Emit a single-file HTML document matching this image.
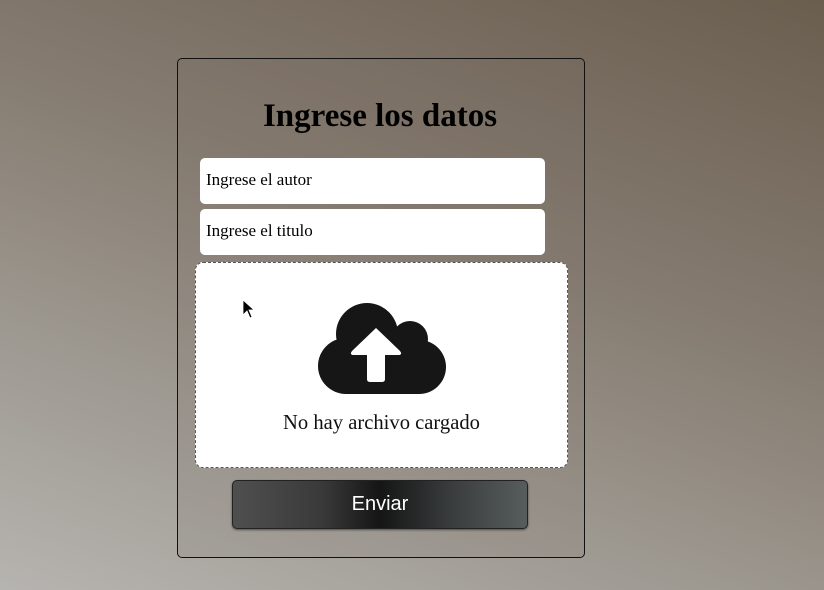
<!DOCTYPE html>
<html><head><meta charset="utf-8"><style>
html,body{margin:0;padding:0;width:824px;height:590px;overflow:hidden}
body{background:linear-gradient(200deg,#6a5e4f 0%,#857b70 40%,#9d9890 70%,#b6b4b0 100%);position:relative;font-family:"Liberation Serif",serif}
.card{position:absolute;left:177px;top:58px;width:406px;height:498px;border:1px solid #111;border-radius:5px;background:rgba(120,110,100,0.15)}
h1{position:absolute;left:0;right:0;top:97px;margin:0;text-align:center;font-size:33px;font-weight:bold;color:#000;line-height:38px}
.inp{position:absolute;left:200px;width:345px;height:46px;background:#fff;border-radius:5px;font-size:17px;line-height:44px;padding-left:6px;box-sizing:border-box;color:#000}
.drop{position:absolute;left:195px;top:262px;width:373px;height:206px;background:#fff;border:1px dashed #555;border-radius:8px;box-sizing:border-box}
.drop .t{position:absolute;left:0;right:0;top:149px;text-align:center;font-size:20.6px;color:#111}
.btn{position:absolute;left:232px;top:480px;width:296px;height:49px;border-radius:5px;box-sizing:border-box;border:1px solid #222;background:linear-gradient(90deg,#4f4f4f 0%,#3a3a3a 30%,#151515 50%,#3a3e3e 75%,#575d5c 100%);color:#fff;font-family:"Liberation Sans",sans-serif;font-size:20px;text-align:center;line-height:46px;box-shadow:0 1px 2px rgba(0,0,0,.5)}
</style></head><body>
<div class="card"></div>
<h1 style="left:177px;width:406px">Ingrese los datos</h1>
<div class="inp" style="top:158px">Ingrese el autor</div>
<div class="inp" style="top:209px">Ingrese el titulo</div>
<div class="drop">
<svg style="position:absolute;left:0;top:0" width="372" height="205" viewBox="195 262 372 205">
<g fill="#161616">
<circle cx="366" cy="333" r="31"/>
<circle cx="409" cy="338" r="18"/>
<circle cx="345" cy="365" r="28"/>
<circle cx="418" cy="366" r="27"/>
<rect x="345" y="330" width="73" height="63"/>
</g>
<path d="M375 327 L351 350 Q348 354 353 354 L366 354 L366 378 Q366 381 369 381 L381 381 Q384 381 384 378 L384 354 L397 354 Q402 354 399 350 Z" fill="#fff"/>
<path d="M242 299 L242 314 L246 310 L249 317 L251 316 L248 309 L253 309 Z" fill="#000" stroke="#fff" stroke-width="0.8"/>
</svg>
<div class="t">No hay archivo cargado</div>
</div>
<div class="btn">Enviar</div>
</body></html>
